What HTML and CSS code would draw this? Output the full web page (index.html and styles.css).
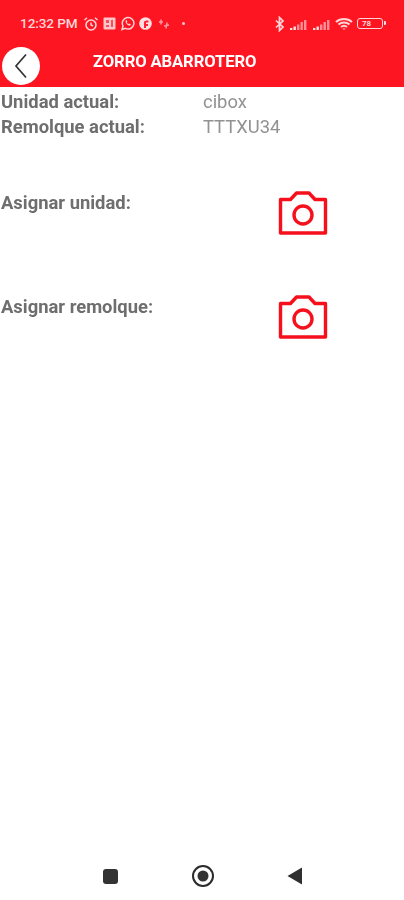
FILE: index.html
```html
<!DOCTYPE html>
<html lang="es">
<head>
<meta charset="utf-8">
<title>Zorro Abarrotero</title>
<link rel="stylesheet" href="styles.css">
</head>
<body>
<div class="screen">
  <header class="appbar">
    <div class="status">
      <span class="time">12:32 PM</span>
      <svg class="si si-left" width="16" height="16" viewBox="0 0 16 16"><circle cx="8" cy="9" r="5" fill="none" stroke="#ffd5d8" stroke-width="1.6"/><path d="M8 6.5V9l2 1M1.500 4 4 1.800M14.500 4 12 1.800" fill="none" stroke="#ffd5d8" stroke-width="1.400"/></svg>
      <svg class="si" width="15" height="15" viewBox="0 0 15 15"><rect x="1.500" y="1.500" width="12" height="12" rx="1" fill="#ffc4c8"/><path d="M4 4h3v3H4zM9 4h2v7H9zM4 9h3v2H4z" fill="#f2505c"/></svg>
      <svg class="si" width="15" height="15" viewBox="0 0 15 15"><path d="M2 13.500l1-3.500a5.800 5.800 0 1 1 2.400 2.400z" fill="none" stroke="#ffd5d8" stroke-width="1.500"/><path d="M5.500 4.800c0 3 2 4.800 4.500 5l.8-1.500-1.800-.8-.7.600c-.8-.4-1.200-1-1.500-1.700l.6-.7-.7-1.800z" fill="#ffd5d8"/></svg>
      <svg class="si" width="15" height="15" viewBox="0 0 15 15"><circle cx="7.500" cy="7.500" r="6.300" fill="#ffe0e2"/><path d="M6 12V6.500C6 5 7 4.500 10.500 4.500v2H8V8h2v2H8v2z" fill="#ff2030"/></svg>
      <svg class="si si-faint" width="12" height="12" viewBox="0 0 12 12"><path d="M1 4h4M3 1.500v5M6 8l5-1M8 10.500l1-6" fill="none" stroke="#ff9aa1" stroke-width="1.500"/></svg>
      <span class="dot"></span>
      <span class="status-right">
        <svg width="10" height="16" viewBox="0 0 10 16"><path d="M1 4.500l7 6.500-3.500 3.500V1.500L8 5 1 11.500" fill="none" stroke="#ffd5d8" stroke-width="1.700"/></svg>
        <svg class="bars" width="19" height="12" viewBox="0 0 19 12"><path d="M1 9h2.400v2H1zM4.500 7.500h2.400V11H4.500z" fill="#ffe0e2"/><path d="M8 5.500h2.400V11H8zM11.500 3h2.400v8h-2.400zM15 1h2.400v10H15z" fill="#ff8f97"/></svg>
        <svg class="bars" width="19" height="12" viewBox="0 0 19 12"><path d="M1 9h2.400v2H1zM4.500 7.500h2.400V11H4.500z" fill="#ffe0e2"/><path d="M8 5.500h2.400V11H8zM11.500 3h2.400v8h-2.400zM15 1h2.400v10H15z" fill="#ff8f97"/></svg>
        <svg width="18" height="14" viewBox="0 0 18 14"><path d="M1 5c4.500-4 11.500-4 16 0M3.500 7.500c3-2.700 8-2.700 11 0M6 10c1.700-1.500 4.300-1.500 6 0" fill="none" stroke="#ffd5d8" stroke-width="2"/><path d="M7.500 11.500 9 13l1.500-1.500z" fill="#ffd5d8"/></svg>
        <span class="battery"><span class="battery-level">78</span></span>
      </span>
    </div>
    <div class="titlebar">
      <button class="back" type="button" aria-label="Volver">
        <svg width="14" height="26" viewBox="0 0 14 26"><path d="M12 1.500 2 13l10 11.500" fill="none" stroke="#333" stroke-width="1.700"/></svg>
      </button>
      <h1 class="title">ZORRO ABARROTERO</h1>
    </div>
  </header>

  <main class="content">
    <div class="info-row"><span class="label">Unidad actual:</span><span class="value">cibox</span></div>
    <div class="info-row"><span class="label">Remolque actual:</span><span class="value">TTTXU34</span></div>

    <div class="assign-row assign-first">
      <span class="label">Asignar unidad:</span>
      <svg class="camera" width="50" height="44" viewBox="0 0 50 44"><path d="M2.500 8.500H12.500L18.500 2H31L37 8.500H47.500V42H2.500Z" fill="none" stroke="#f5101c" stroke-width="3.400" stroke-linejoin="round"/><circle cx="25" cy="24" r="9" fill="none" stroke="#f5101c" stroke-width="3.400"/></svg>
    </div>
    <div class="assign-row">
      <span class="label">Asignar remolque:</span>
      <svg class="camera" width="50" height="44" viewBox="0 0 50 44"><path d="M2.500 8.500H12.500L18.500 2H31L37 8.500H47.500V42H2.500Z" fill="none" stroke="#f5101c" stroke-width="3.400" stroke-linejoin="round"/><circle cx="25" cy="24" r="9" fill="none" stroke="#f5101c" stroke-width="3.400"/></svg>
    </div>
  </main>

  <nav class="navbar">
    <span class="nav-square"></span>
    <svg width="24" height="24" viewBox="0 0 24 24"><circle cx="12" cy="12" r="10" fill="none" stroke="#2b2b2b" stroke-width="2"/><circle cx="12" cy="12" r="5.500" fill="#333"/></svg>
    <svg width="16" height="18" viewBox="0 0 16 18"><path d="M15 0.500v17L0.500 9z" fill="#2f2f2f"/></svg>
  </nav>
</div>
</body>
</html>
```
FILE: styles.css
```css
* { box-sizing: border-box; }
html, body { margin: 0; padding: 0; background: #fff; }
.screen {
  width: 404px;
  height: 900px;
  display: flex;
  flex-direction: column;
  font-family: Roboto, "Liberation Sans", sans-serif;
  overflow: hidden;
  filter: blur(0.4px);
}
.appbar {
  height: 87px;
  flex: none;
  background: #fe1522;
  color: #fff;
  display: flex;
  flex-direction: column;
}
.status {
  height: 46px;
  padding: 15px 21px 0 20px;
  display: flex;
  align-items: flex-start;
  gap: 3px;
}
.time {
  font-size: 13.600px;
  font-weight: 500;
  line-height: 17px;
  color: #ffd5d8;
  width: 59px;
  white-space: nowrap;
  letter-spacing: -0.1px;
}
.si { flex: none; margin-top: 1px; }
.si-left { margin-left: 1px; }
.si-faint { margin-top: 3px; margin-left: 2px; }
.dot {
  width: 3px;
  height: 3px;
  border-radius: 50%;
  background: #ffc4c8;
  margin: 7px 0 0 9px;
}
.status-right {
  margin-left: auto;
  display: flex;
  align-items: center;
  gap: 4px;
  height: 17px;
}
.bars { margin-top: 2px; }
.battery {
  width: 26px;
  height: 11px;
  border: 1.500px solid #ffd5d8;
  border-radius: 3px;
  position: relative;
  display: flex;
  align-items: center;
  padding-left: 1px;
}
.battery::after {
  content: "";
  position: absolute;
  right: -4px;
  top: 2px;
  width: 2px;
  height: 4px;
  background: #ffd5d8;
  border-radius: 0 1px 1px 0;
}
.battery-level {
  font-size: 8px;
  line-height: 8px;
  font-weight: 700;
  color: #ffd5d8;
  padding-left: 3px;
}
.titlebar {
  display: flex;
  align-items: center;
  height: 40px;
  padding-left: 2px;
}
.back {
  width: 38px;
  height: 38px;
  padding: 0;
  border: 0;
  border-radius: 50%;
  background: #fff;
  display: flex;
  align-items: center;
  justify-content: center;
  flex: none;
}
.title {
  margin: 0 0 9px 53px;
  font-size: 16.600px;
  font-weight: 700;
  line-height: 20px;
  color: #fff;
  white-space: nowrap;
  letter-spacing: -0.1px;
}
.content {
  flex: 1;
  display: flex;
  flex-direction: column;
  padding: 2px 0 0 1px;
}
.info-row {
  display: flex;
  height: 25px;
  align-items: center;
}
.label {
  font-size: 18.400px;
  font-weight: 700;
  color: #6e6e6e;
  line-height: 22px;
  width: 202px;
  flex: none;
}
.value {
  font-size: 18.400px;
  color: #929292;
  line-height: 22px;
}
.assign-row {
  display: flex;
  align-items: flex-start;
  height: 104px;
}
.assign-first { margin-top: 53px; }
.camera { margin: -1px 0 0 75px; flex: none; }
.navbar {
  height: 46px;
  margin-bottom: 1px;
  flex: none;
  display: flex;
  align-items: center;
  padding-left: 103px;
  gap: 0;
}
.nav-square {
  width: 15px;
  height: 15px;
  border-radius: 3px;
  background: #333;
  margin-right: 73px;
}
.navbar svg:last-child { margin-left: 72px; }
```
